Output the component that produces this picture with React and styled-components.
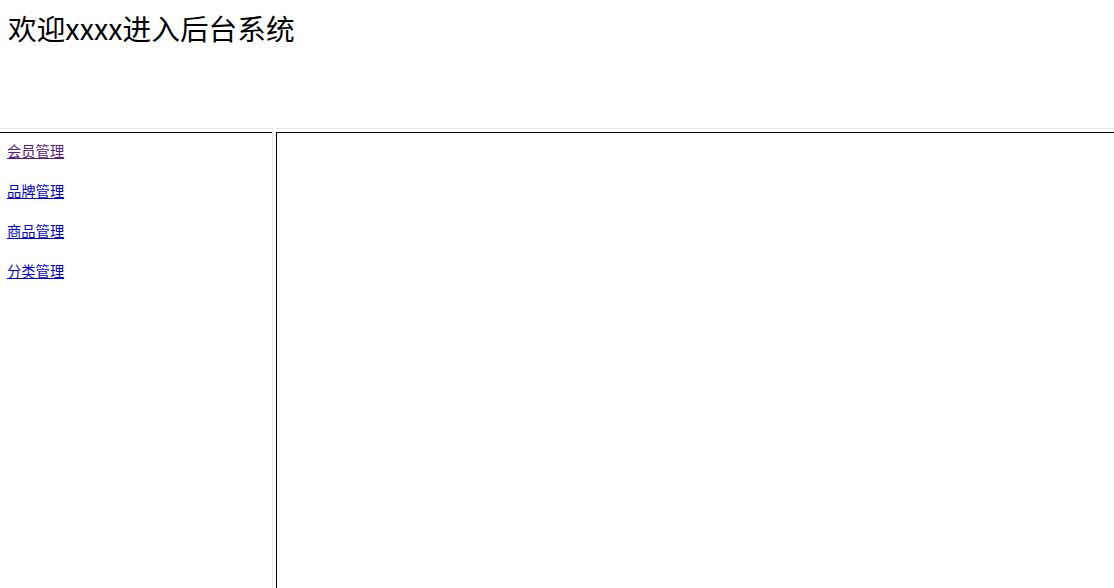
import React from "react";
import styled, { createGlobalStyle } from "styled-components";

const GlobalStyle = createGlobalStyle`
  html, body {
    margin: 0;
    padding: 0;
    height: 100%;
    background: #fff;
  }
  #root {
    height: 100%;
  }
`;

const Page = styled.div`
  display: flex;
  flex-direction: column;
  height: 100vh;
  overflow: hidden;
  font-family: "Noto Sans CJK SC", "Liberation Sans", sans-serif;
`;

const Header = styled.header`
  height: 129px;
  flex: none;
  padding: 8px 8px 0;
  box-sizing: border-box;
  border-bottom: 1px solid #e6e6e6;
`;

const Title = styled.h1`
  margin: 0;
  font-size: 28.7px;
  font-weight: 400;
  line-height: 40px;
  color: #000;
`;

const Split = styled.div`
  height: 3px;
  flex: none;
  background: #fff;
`;

const Frames = styled.div`
  flex: 1;
  display: flex;
  border-top: 1px solid #000;
  min-height: 0;
`;

const Sidebar = styled.nav`
  width: 272px;
  flex: none;
  padding: 8px 7px;
  box-sizing: border-box;
  display: flex;
  flex-direction: column;
  align-items: flex-start;
  gap: 20px;
`;

const MenuLink = styled.a`
  font-size: 14.3px;
  line-height: 20px;
  color: ${({ $visited }) => ($visited ? "#551a8b" : "#0000ee")};
  text-decoration: underline;
  cursor: pointer;
`;

const VSplit = styled.div`
  width: 4px;
  flex: none;
  background: #fff;
  border-left: 1px solid #e6e6e6;
  box-sizing: border-box;
  margin-top: -5px;
`;

const Content = styled.main`
  flex: 1;
  border-left: 1px solid #000;
`;

const menu = [
  { label: "会员管理", visited: true },
  { label: "品牌管理" },
  { label: "商品管理" },
  { label: "分类管理" },
];

export default function App() {
  return (
    <>
      <GlobalStyle />
      <Page>
        <Header>
          <Title>欢迎xxxx进入后台系统</Title>
        </Header>
        <Split />
        <Frames>
          <Sidebar>
            {menu.map((m) => (
              <MenuLink key={m.label} $visited={m.visited}>
                {m.label}
              </MenuLink>
            ))}
          </Sidebar>
          <VSplit />
          <Content />
        </Frames>
      </Page>
    </>
  );
}
